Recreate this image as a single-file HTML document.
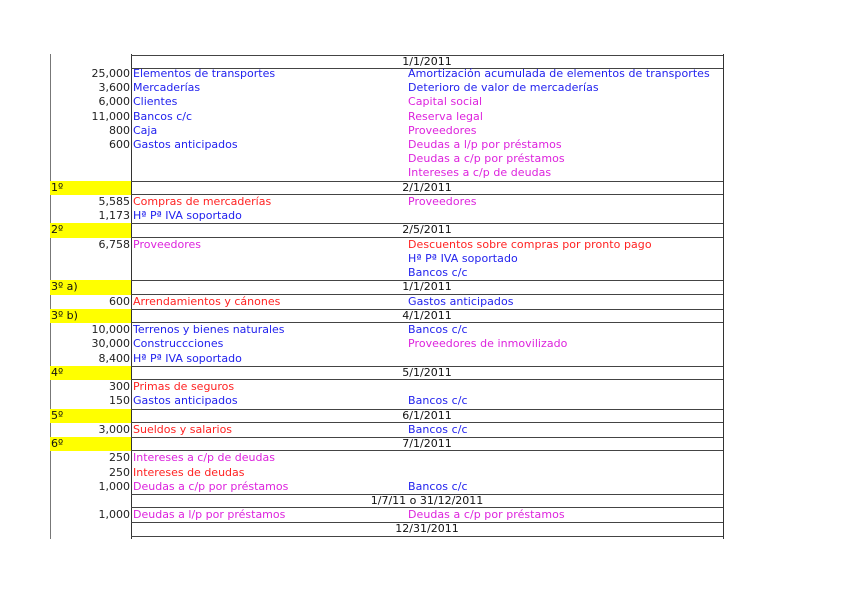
<!DOCTYPE html>
<html><head><meta charset="utf-8"><style>
body{margin:0;background:#fff;width:848px;height:599px;position:relative;overflow:hidden;font-family:"DejaVu Sans","Liberation Sans",sans-serif;font-size:11px;}
.vl{position:absolute;width:1px;background:#333;}
.w{position:absolute;left:0;top:1.5px;width:848px;height:599px;}
.r{position:absolute;height:14.24px;line-height:14.24px;white-space:nowrap;}
.a{left:50px;width:80px;text-align:right;color:#222;}
.l{left:133px;}
.rt{left:408px;letter-spacing:0.05px;}
.d{left:131px;width:592px;text-align:center;color:#111;border-top:1px solid #444;border-bottom:1px solid #444;box-sizing:border-box;line-height:12.5px;}
.y{left:50px;width:81px;background:#ffff00;color:#111;padding-left:1px;box-sizing:border-box;}
.b{color:#2222ee}.m{color:#dd22dd}.rd{color:#ff2222}
</style></head><body>
<div class="vl" style="left:50px;top:54px;height:485px;background:#777"></div>
<div class="vl" style="left:131px;top:54px;height:485px;"></div>
<div class="vl" style="left:723px;top:54px;height:485px;"></div>
<div class="w">
<div class="r d" style="top:53px">1/1/2011</div>
<div class="r a" style="top:65.2px">25,000</div><div class="r l b" style="top:65.2px">Elementos de transportes</div><div class="r rt b" style="top:65.2px">Amortización acumulada de elementos de transportes</div>
<div class="r a" style="top:79.5px">3,600</div><div class="r l b" style="top:79.5px">Mercaderías</div><div class="r rt b" style="top:79.5px">Deterioro de valor de mercaderías</div>
<div class="r a" style="top:93.7px">6,000</div><div class="r l b" style="top:93.7px">Clientes</div><div class="r rt m" style="top:93.7px">Capital social</div>
<div class="r a" style="top:108px">11,000</div><div class="r l b" style="top:108px">Bancos c/c</div><div class="r rt m" style="top:108px">Reserva legal</div>
<div class="r a" style="top:122.2px">800</div><div class="r l b" style="top:122.2px">Caja</div><div class="r rt m" style="top:122.2px">Proveedores</div>
<div class="r a" style="top:136.4px">600</div><div class="r l b" style="top:136.4px">Gastos anticipados</div><div class="r rt m" style="top:136.4px">Deudas a l/p por préstamos</div>
<div class="r rt m" style="top:150.7px">Deudas a c/p por préstamos</div>
<div class="r rt m" style="top:164.9px">Intereses a c/p de deudas</div>
<div class="r y" style="top:179.2px">1º</div><div class="r d" style="top:179.2px">2/1/2011</div>
<div class="r a" style="top:193.4px">5,585</div><div class="r l rd" style="top:193.4px">Compras de mercaderías</div><div class="r rt m" style="top:193.4px">Proveedores</div>
<div class="r a" style="top:207.6px">1,173</div><div class="r l b" style="top:207.6px">Hª Pª IVA soportado</div>
<div class="r y" style="top:221.9px">2º</div><div class="r d" style="top:221.9px">2/5/2011</div>
<div class="r a" style="top:236.1px">6,758</div><div class="r l m" style="top:236.1px">Proveedores</div><div class="r rt rd" style="top:236.1px">Descuentos sobre compras por pronto pago</div>
<div class="r rt b" style="top:250.4px">Hª Pª IVA soportado</div>
<div class="r rt b" style="top:264.6px">Bancos c/c</div>
<div class="r y" style="top:278.8px">3º a)</div><div class="r d" style="top:278.8px">1/1/2011</div>
<div class="r a" style="top:293.1px">600</div><div class="r l rd" style="top:293.1px">Arrendamientos y cánones</div><div class="r rt b" style="top:293.1px">Gastos anticipados</div>
<div class="r y" style="top:307.3px">3º b)</div><div class="r d" style="top:307.3px">4/1/2011</div>
<div class="r a" style="top:321.6px">10,000</div><div class="r l b" style="top:321.6px">Terrenos y bienes naturales</div><div class="r rt b" style="top:321.6px">Bancos c/c</div>
<div class="r a" style="top:335.8px">30,000</div><div class="r l b" style="top:335.8px">Construccciones</div><div class="r rt m" style="top:335.8px">Proveedores de inmovilizado</div>
<div class="r a" style="top:350px">8,400</div><div class="r l b" style="top:350px">Hª Pª IVA soportado</div>
<div class="r y" style="top:364.3px">4º</div><div class="r d" style="top:364.3px">5/1/2011</div>
<div class="r a" style="top:378.5px">300</div><div class="r l rd" style="top:378.5px">Primas de seguros</div>
<div class="r a" style="top:392.8px">150</div><div class="r l b" style="top:392.8px">Gastos anticipados</div><div class="r rt b" style="top:392.8px">Bancos c/c</div>
<div class="r y" style="top:407px">5º</div><div class="r d" style="top:407px">6/1/2011</div>
<div class="r a" style="top:421.2px">3,000</div><div class="r l rd" style="top:421.2px">Sueldos y salarios</div><div class="r rt b" style="top:421.2px">Bancos c/c</div>
<div class="r y" style="top:435.5px">6º</div><div class="r d" style="top:435.5px">7/1/2011</div>
<div class="r a" style="top:449.7px">250</div><div class="r l m" style="top:449.7px">Intereses a c/p de deudas</div>
<div class="r a" style="top:464px">250</div><div class="r l rd" style="top:464px">Intereses de deudas</div>
<div class="r a" style="top:478.2px">1,000</div><div class="r l m" style="top:478.2px">Deudas a c/p por préstamos</div><div class="r rt b" style="top:478.2px">Bancos c/c</div>
<div class="r d" style="top:492.4px">1/7/11 o 31/12/2011</div>
<div class="r a" style="top:506.7px">1,000</div><div class="r l m" style="top:506.7px">Deudas a l/p por préstamos</div><div class="r rt m" style="top:506.7px">Deudas a c/p por préstamos</div>
<div class="r d" style="top:520.9px">12/31/2011</div>
</div>
</body></html>
